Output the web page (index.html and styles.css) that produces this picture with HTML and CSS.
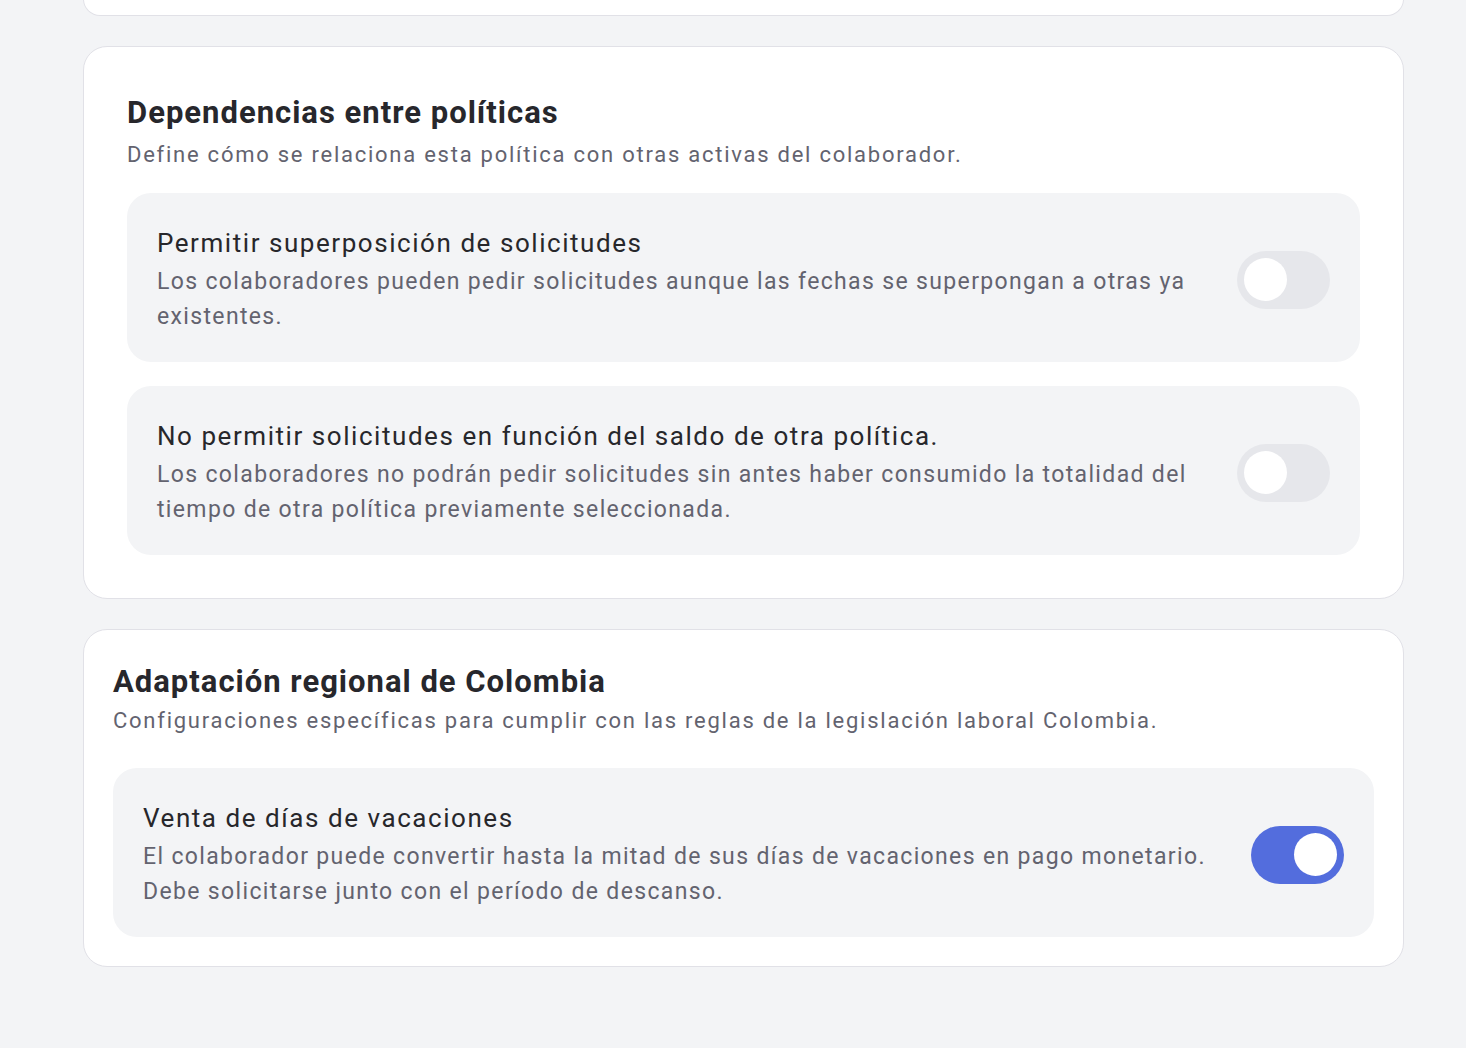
FILE: index.html
```html
<!DOCTYPE html>
<html lang="es">
<head>
  <meta charset="UTF-8" />
  <meta name="viewport" content="width=device-width, initial-scale=1.0" />
  <title>Configuración de política</title>
  <link rel="stylesheet" href="styles.css">
</head>
<body>

  <div class="page">
    <div class="card card-prev"></div>

    <section class="card card-deps">
      <h2 class="card-title">Dependencias entre políticas</h2>
      <p class="card-subtitle">Define cómo se relaciona esta política con otras activas del colaborador.</p>

      <div class="option-list">
        <div class="option">
          <div class="option-text">
            <h3>Permitir superposición de solicitudes</h3>
            <p>Los colaboradores pueden pedir solicitudes aunque las fechas se superpongan a otras ya existentes.</p>
          </div>
          <button class="toggle" type="button" aria-pressed="false"><span class="knob"></span></button>
        </div>

        <div class="option">
          <div class="option-text">
            <h3>No permitir solicitudes en función del saldo de otra política.</h3>
            <p>Los colaboradores no podrán pedir solicitudes sin antes haber consumido la totalidad del tiempo de otra política previamente seleccionada.</p>
          </div>
          <button class="toggle" type="button" aria-pressed="false"><span class="knob"></span></button>
        </div>
      </div>
    </section>

    <section class="card card-region">
      <h2 class="card-title">Adaptación regional de Colombia</h2>
      <p class="card-subtitle">Configuraciones específicas para cumplir con las reglas de la legislación laboral Colombia.</p>

      <div class="option-list">
        <div class="option">
          <div class="option-text">
            <h3>Venta de días de vacaciones</h3>
            <p>El colaborador puede convertir hasta la mitad de sus días de vacaciones en pago monetario. Debe solicitarse junto con el período de descanso.</p>
          </div>
          <button class="toggle on" type="button" aria-pressed="true"><span class="knob"></span></button>
        </div>
      </div>
    </section>
  </div>

  <script>
    document.querySelectorAll('.toggle').forEach(btn => {
      btn.addEventListener('click', () => {
        const on = btn.classList.toggle('on');
        btn.setAttribute('aria-pressed', on);
      });
    });
  </script>

</body>
</html>
```

FILE: styles.css
```css
* {
  box-sizing: border-box;
}

body {
  margin: 0;
  font-family: Roboto, "Noto Sans", "Liberation Sans", sans-serif;
  background: #f3f4f6;
  color: #28282d;
}

.page {
  display: flex;
  flex-direction: column;
  gap: 30px;
  padding: 0 62px 80px 83px;
}

.card {
  background: #fff;
  border: 1px solid #e1e1e7;
  border-radius: 24px;
}

.card-prev {
  height: 17px;
  margin-top: -1px;
  border-top: none;
  border-radius: 0 0 24px 24px;
}

.card-title {
  margin: 0;
  font-size: 31px;
  font-weight: 700;
  letter-spacing: 1px;
  color: #27272c;
}

.card-subtitle {
  margin: 0;
  font-size: 22px;
  letter-spacing: 1.75px;
  color: #63636f;
}

/* first card has roomier header */
.card-deps {
  padding: 46px 43px 43px 43px;
}

.card-deps .card-title {
  line-height: 40px;
}

.card-deps .card-subtitle {
  margin-top: 6px;
  line-height: 32px;
}

.card-deps .option-list {
  margin-top: 22px;
}

.card-region {
  padding: 35px 29px 29px 29px;
}

.card-region .card-title {
  line-height: 34px;
}

.card-region .card-subtitle {
  margin-top: 8px;
  line-height: 28px;
}

.card-region .option-list {
  margin-top: 33px;
}

.option-list {
  display: flex;
  flex-direction: column;
  gap: 24px;
}

.option {
  display: flex;
  align-items: center;
  gap: 40px;
  background: #f3f4f6;
  border-radius: 24px;
  padding: 32px 30px 28px 30px;
}

.option-text {
  flex: 1;
}

.option-text h3 {
  margin: 0;
  font-size: 26px;
  font-weight: 400;
  line-height: 36px;
  letter-spacing: 1.55px;
  color: #27272b;
}

.option-text p {
  margin: 3px 0 0;
  font-size: 23px;
  line-height: 35px;
  letter-spacing: 1.35px;
  color: #63636f;
}

.toggle {
  flex: 0 0 auto;
  position: relative;
  width: 93px;
  height: 58px;
  padding: 0;
  border: none;
  border-radius: 29px;
  background: #e6e7eb;
  cursor: pointer;
}

.knob {
  position: absolute;
  top: 7px;
  left: 7px;
  width: 43px;
  height: 43px;
  border-radius: 50%;
  background: #fff;
  transition: left 0.2s ease;
}

.toggle.on {
  background: #536ddd;
}

.toggle.on .knob {
  left: 43px;
}
```
